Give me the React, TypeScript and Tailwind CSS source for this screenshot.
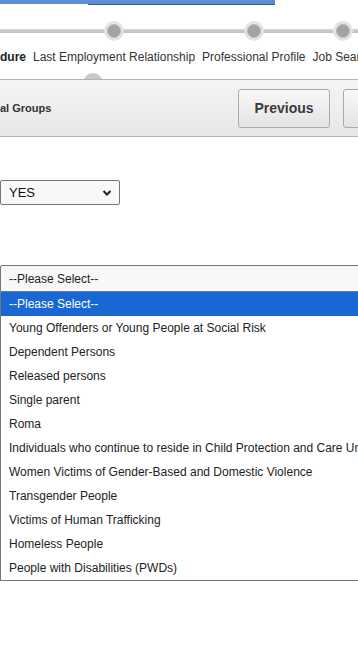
import React from "react";

const items = [
  "Young Offenders or Young People at Social Risk",
  "Dependent Persons",
  "Released persons",
  "Single parent",
  "Roma",
  "Individuals who continue to reside in Child Protection and Care Units",
  "Women Victims of Gender-Based and Domestic Violence",
  "Transgender People",
  "Victims of Human Trafficking",
  "Homeless People",
  "People with Disabilities (PWDs)",
];

function Dot() {
  return (
    <div className="w-[20px] h-[20px] rounded-full bg-[#e4e4e4] flex items-center justify-center">
      <div className="w-[14px] h-[14px] rounded-full bg-[#a3a3a3] border border-[#b8b8b8]" />
    </div>
  );
}

export default function App() {
  return (
    <div
      className="relative w-[358px] h-[660px] overflow-hidden bg-white text-[#333]"
      style={{ fontFamily: '"Liberation Sans", Arial, sans-serif' }}
    >
      {/* top blue bar */}
      <div className="flex w-[275px] h-[5px]">
        <div className="w-[88px] h-[4px] bg-[#5b8ed8]" />
        <div className="flex-1 h-[5px] bg-[#5b8ed8] border-b border-[#2f5f9e]" />
      </div>

      {/* steps */}
      <div className="relative h-[74px]">
        <div className="absolute left-0 right-0 top-[24px] h-[4px] bg-gradient-to-b from-[#d6d6d6] to-[#bdbdbd]" />
        <div className="relative flex gap-[7px] pt-[16px] whitespace-nowrap text-[12px]">
          <div className="flex flex-col items-center">
            <div className="h-[20px]" />
            <div className="mt-[7px] font-bold text-[#222]">dure</div>
          </div>
          <div className="flex flex-col items-center">
            <Dot />
            <div className="mt-[7px]">Last Employment Relationship</div>
          </div>
          <div className="flex flex-col items-center">
            <Dot />
            <div className="mt-[7px]">Professional Profile</div>
          </div>
          <div className="flex flex-col items-center">
            <Dot />
            <div className="mt-[7px]">Job Search</div>
          </div>
        </div>
        <div className="absolute left-[83px] top-[68px] w-[20px] h-[20px] rounded-full bg-[#c9c9c9]" />
      </div>

      {/* panel */}
      <div className="relative flex items-center w-[470px] h-[58px] border-y border-[#b3b3b3] bg-gradient-to-b from-[#f5f5f5] to-[#e7e7e7]">
        <div className="w-[238px] text-[11px] font-bold text-[#333]">al Groups</div>
        <div className="flex gap-[13px]">
          <div className="w-[92px] h-[39px] rounded-[3px] border border-[#a9a9a9] bg-gradient-to-b from-[#f9f9f9] to-[#e3e3e3] flex items-center justify-center text-[14px] font-bold text-[#3a3a3a]">
            Previous
          </div>
          <div className="w-[92px] h-[39px] rounded-[3px] border border-[#a9a9a9] bg-gradient-to-b from-[#f9f9f9] to-[#e3e3e3] flex items-center justify-center text-[14px] font-bold text-[#3a3a3a]">
            Next
          </div>
        </div>
      </div>

      {/* YES select */}
      <div className="mt-[43px] w-[120px] h-[25px] rounded-[2px] border border-[#767676] bg-[#f8f8f8] flex items-center justify-between pl-[8px] pr-[7px] text-[13px] text-[#111]">
        <span>YES</span>
        <svg width="10" height="8" viewBox="0 0 10 8">
          <path d="M1.5 2 L5 5.5 L8.5 2" fill="none" stroke="#222" strokeWidth="2" />
        </svg>
      </div>

      {/* group select */}
      <div className="mt-[60px] w-[380px] h-[27px] rounded-t-[2px] border border-[#767676] bg-[#f8f8f8] flex items-center pl-[8px] text-[12px] text-[#222]">
        --Please Select--
      </div>
      <div className="w-[380px] border-x border-b border-[#767676] bg-white text-[12px] text-[#222] whitespace-nowrap">
        <div className="h-[24px] flex items-center pl-[8px] bg-[#1967d2] text-white">--Please Select--</div>
        {items.map((t) => (
          <div key={t} className="h-[24px] flex items-center pl-[8px]">
            {t}
          </div>
        ))}
      </div>
    </div>
  );
}
